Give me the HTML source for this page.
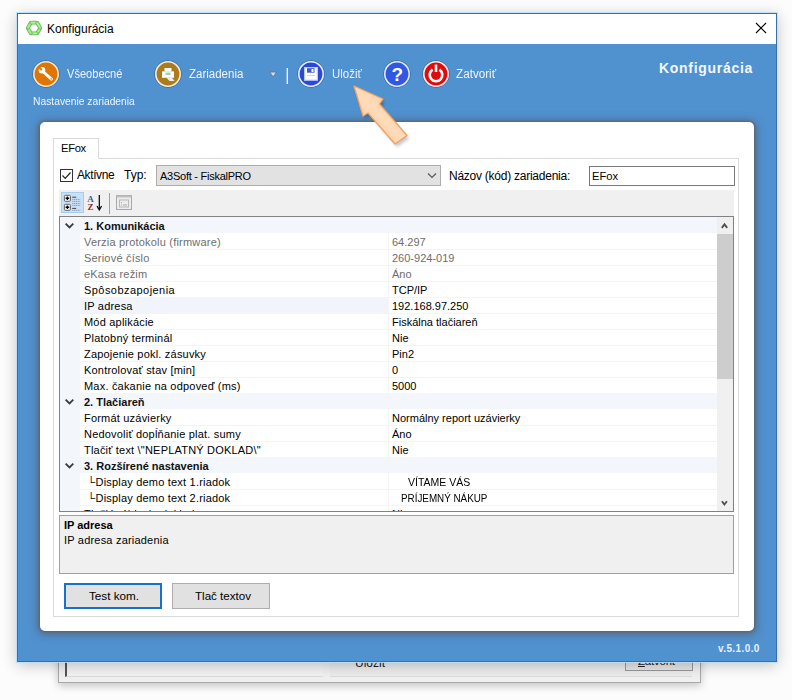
<!DOCTYPE html><html><head><meta charset="utf-8"><style>
*{margin:0;padding:0;box-sizing:border-box}
html,body{width:792px;height:700px;overflow:hidden;background:#fcfcfc;font-family:"Liberation Sans", sans-serif}
.a{position:absolute}
.t{white-space:nowrap}
</style></head><body><div class="a" style="left:58px;top:640px;width:643px;height:43px;background:#f0f0f0;border:1px solid #a9a9a9;box-shadow:0 3px 8px rgba(0,0,0,0.22)"></div>
<div class="a" style="left:65px;top:640px;width:258px;height:37px;background:#f3f3f3;border-left:2px solid #555;border-bottom:1px solid #ddd"></div>
<div class="a" style="left:330px;top:640px;width:362px;height:37px;background:#ececec;border-bottom:1px solid #ddd"></div>
<div class="a t" style="left:355px;top:657px;font-size:12px;line-height:12px;color:#222;font-weight:400;letter-spacing:0px;">Uložiť</div>
<div class="a" style="left:625px;top:650px;width:68px;height:21px;background:#e6e6e6;border:1px solid #999"></div>
<div class="a t" style="left:638px;top:656px;font-size:11.5px;line-height:11.5px;color:#222;font-weight:400;letter-spacing:-0.2px;"><u>Z</u>atvoriť</div>
<div class="a" style="left:17px;top:13px;width:760px;height:649px;background:#5091d0;border:1px solid #3a6fa3;box-shadow:0 0 0 1px rgba(185,222,255,0.85),0 3px 14px rgba(0,0,0,0.24)"></div>
<div class="a" style="left:18px;top:14px;width:758px;height:30px;background:#fff"></div>
<div class="a t" style="left:47px;top:23px;font-size:12px;line-height:12px;color:#000;font-weight:400;letter-spacing:0px;">Konfigurácia</div>
<svg class="a" style="left:755px;top:22px" width="12" height="12" viewBox="0 0 12 12"><path d="M1 1L11 11M11 1L1 11" stroke="#000" stroke-width="1.1"/></svg>
<svg class="a" style="left:25px;top:19px" width="18" height="18" viewBox="0 0 18 18"><path d="M14.95 9.43L12.35 13.94" stroke="#62b552" stroke-width="3.8" stroke-linecap="round"/><path d="M14.95 9.43L12.35 13.94" stroke="#a9ee92" stroke-width="2.2" stroke-linecap="round"/><path d="M11.60 14.37L6.40 14.37" stroke="#62b552" stroke-width="3.8" stroke-linecap="round"/><path d="M11.60 14.37L6.40 14.37" stroke="#a9ee92" stroke-width="2.2" stroke-linecap="round"/><path d="M5.65 13.94L3.05 9.43" stroke="#62b552" stroke-width="3.8" stroke-linecap="round"/><path d="M5.65 13.94L3.05 9.43" stroke="#a9ee92" stroke-width="2.2" stroke-linecap="round"/><path d="M3.05 8.57L5.65 4.06" stroke="#62b552" stroke-width="3.8" stroke-linecap="round"/><path d="M3.05 8.57L5.65 4.06" stroke="#a9ee92" stroke-width="2.2" stroke-linecap="round"/><path d="M6.40 3.63L11.60 3.63" stroke="#62b552" stroke-width="3.8" stroke-linecap="round"/><path d="M6.40 3.63L11.60 3.63" stroke="#a9ee92" stroke-width="2.2" stroke-linecap="round"/><path d="M12.35 4.06L14.95 8.57" stroke="#62b552" stroke-width="3.8" stroke-linecap="round"/><path d="M12.35 4.06L14.95 8.57" stroke="#a9ee92" stroke-width="2.2" stroke-linecap="round"/></svg>
<svg class="a" style="left:32px;top:60px" width="28" height="28" viewBox="0 0 28 28"><circle cx="14" cy="14" r="13.4" fill="none" stroke="rgba(30,40,60,0.35)" stroke-width="0.9"/><circle cx="14" cy="14" r="12.2" fill="#df7604" stroke="#f6e4cc" stroke-width="1.6"/><path d="M11.5 12 L19.4 19.1" stroke="#fff" stroke-width="3" stroke-linecap="round"/><circle cx="10" cy="10.2" r="3.3" fill="#fff"/><path d="M6.4 6.6 L9.8 10" stroke="#df7604" stroke-width="2"/><circle cx="19.2" cy="19" r="0.8" fill="#b87a50"/></svg>
<div class="a t" style="left:67px;top:68px;font-size:12.3px;line-height:12.3px;color:#eef4ff;font-weight:400;letter-spacing:0px;transform:scaleX(0.9);transform-origin:0 0;">Všeobecné</div>
<svg class="a" style="left:154px;top:60px" width="28" height="28" viewBox="0 0 28 28"><circle cx="14" cy="14" r="13.4" fill="none" stroke="rgba(30,40,60,0.35)" stroke-width="0.9"/><circle cx="14" cy="14" r="12.2" fill="#ac7b1d" stroke="#f6ecd6" stroke-width="1.6"/><rect x="10.5" y="8" width="7" height="3.6" fill="#fff"/><rect x="8" y="11.4" width="12" height="6.4" fill="#fff"/><rect x="11.5" y="12.5" width="5" height="2.5" fill="#a6d4a6"/><path d="M12.5 17.8 L18 17.8 L20.5 21 L15.5 21 Z" fill="#f0e8f2"/></svg>
<div class="a t" style="left:189px;top:68px;font-size:12.3px;line-height:12.3px;color:#eef4ff;font-weight:400;letter-spacing:0px;transform:scaleX(0.935);transform-origin:0 0;">Zariadenia</div>
<svg class="a" style="left:269px;top:71px" width="8" height="7" viewBox="0 0 8 7"><path d="M1 1.2H7.2L4.1 5.6Z" fill="#dcdde6" stroke="rgba(50,60,80,0.45)" stroke-width="0.7" stroke-linejoin="round"/></svg>
<div class="a" style="left:287px;top:68px;width:1px;height:16px;background:#e6f5ff;box-shadow:-1px 0 0 rgba(190,225,250,0.55)"></div>
<svg class="a" style="left:297px;top:60px" width="28" height="28" viewBox="0 0 28 28"><circle cx="14" cy="14" r="13.4" fill="none" stroke="rgba(30,40,60,0.35)" stroke-width="0.9"/><circle cx="14" cy="14" r="12.2" fill="#2b49d6" stroke="#e6ecff" stroke-width="1.6"/><rect x="7.6" y="7.6" width="12.8" height="12.6" fill="#fff" stroke="#b9c8ff" stroke-width="1.2"/><rect x="10" y="8.2" width="7.5" height="4.5" fill="#3a5ad8"/><rect x="14.5" y="9" width="2" height="3" fill="#fff"/><rect x="10" y="15" width="8" height="0.9" fill="#f0c8a0"/></svg>
<div class="a t" style="left:332px;top:68px;font-size:12.3px;line-height:12.3px;color:#eef4ff;font-weight:400;letter-spacing:0px;transform:scaleX(0.93);transform-origin:0 0;">Uložiť</div>
<svg class="a" style="left:383px;top:60px" width="28" height="28" viewBox="0 0 28 28"><circle cx="14" cy="14" r="13.4" fill="none" stroke="rgba(30,40,60,0.35)" stroke-width="0.9"/><circle cx="14" cy="14" r="12.2" fill="#3158e2" stroke="#dfe8ff" stroke-width="1.6"/><text x="14.2" y="21" font-family="Liberation Sans" font-weight="700" font-size="19" fill="#fff" text-anchor="middle">?</text></svg>
<svg class="a" style="left:422px;top:60px" width="28" height="28" viewBox="0 0 28 28"><circle cx="14" cy="14" r="13.4" fill="none" stroke="rgba(30,40,60,0.35)" stroke-width="0.9"/><circle cx="14" cy="14" r="12.2" fill="#e20b0b" stroke="#ffe6e6" stroke-width="1.6"/><path d="M10.6 9.6 A6.3 6.3 0 1 0 17.4 9.6" fill="none" stroke="#fff" stroke-width="2.6"/><path d="M14 4.6V12" stroke="#fff" stroke-width="2.6"/></svg>
<div class="a t" style="left:456px;top:68px;font-size:12.3px;line-height:12.3px;color:#eef4ff;font-weight:400;letter-spacing:0px;transform:scaleX(0.95);transform-origin:0 0;">Zatvoriť</div>
<div class="a t" style="left:659px;top:61px;font-size:14px;line-height:14px;color:#f4f8ff;font-weight:700;letter-spacing:0.7px;">Konfigurácia</div>
<div class="a t" style="left:33px;top:96px;font-size:10.5px;line-height:10.5px;color:#eef5ff;font-weight:400;letter-spacing:0px;transform:scaleX(0.98);transform-origin:0 0;">Nastavenie zariadenia</div>
<div class="a t" style="left:718px;top:644px;font-size:10px;line-height:10px;color:#e6f0ff;font-weight:700;letter-spacing:0.4px;">v.5.1.0.0</div>
<div class="a" style="left:40px;top:122px;width:714px;height:509px;background:#fff;border-radius:5px;box-shadow:0 0 2px 1px rgba(90,94,100,0.6),0 1px 9px 2px rgba(90,94,100,0.85)"></div>
<div class="a" style="left:53px;top:158px;width:686px;height:459px;border:1px solid #dadada"></div>
<div class="a" style="left:53px;top:138px;width:46px;height:21px;background:#fff;border:1px solid #dadada;border-bottom:none"></div>
<div class="a t" style="left:61px;top:143px;font-size:11.2px;line-height:11.2px;color:#000;font-weight:400;letter-spacing:-0.3px;">EFox</div>
<div class="a" style="left:60px;top:169px;width:13px;height:13px;border:1px solid #333;background:#fff"></div>
<svg class="a" style="left:61px;top:170px" width="11" height="11" viewBox="0 0 11 11"><path d="M1.5 5.5L4.2 8.3L9.5 2.5" fill="none" stroke="#222" stroke-width="1.2"/></svg>
<div class="a t" style="left:77px;top:169px;font-size:12px;line-height:12px;color:#000;font-weight:400;letter-spacing:-0.4px;">Aktívne</div>
<div class="a t" style="left:124px;top:169px;font-size:12px;line-height:12px;color:#000;font-weight:400;letter-spacing:0px;">Typ:</div>
<div class="a" style="left:156px;top:165px;width:285px;height:21px;background:#e2e2e2;border:1px solid #adadad"></div>
<div class="a t" style="left:160px;top:171px;font-size:11px;line-height:11px;color:#000;font-weight:400;letter-spacing:-0.25px;">A3Soft - FiskalPRO</div>
<svg class="a" style="left:427px;top:172px" width="10" height="7" viewBox="0 0 10 7"><path d="M1 1.5L5 5.5L9 1.5" fill="none" stroke="#555" stroke-width="1.1"/></svg>
<div class="a t" style="left:449px;top:170px;font-size:12px;line-height:12px;color:#000;font-weight:400;letter-spacing:-0.25px;">Názov (kód) zariadenia:</div>
<div class="a" style="left:589px;top:166px;width:146px;height:20px;background:#fff;border:1px solid #7a7a7a"></div>
<div class="a t" style="left:592px;top:171px;font-size:11.2px;line-height:11.2px;color:#000;font-weight:400;letter-spacing:0px;">EFox</div>
<div class="a" style="left:59px;top:190px;width:675px;height:26px;background:#f0f0f0"></div>
<div class="a" style="left:61px;top:192px;width:23px;height:21px;background:#c9e0f7;border:1px solid #a6cdf0"></div>
<svg class="a" style="left:62px;top:193px" width="21" height="19" viewBox="0 0 21 19"><g fill="#fff" stroke="#505050" stroke-width="0.9"><rect x="2.4" y="2.3" width="6" height="6" rx="1"/><rect x="2.4" y="11.3" width="6" height="6" rx="1"/></g><g stroke="#000" stroke-width="1.4"><path d="M3.6 5.3h3.6M5.4 3.5v3.6M3.6 14.3h3.6M5.4 12.5v3.6"/></g><g stroke="#333" stroke-width="0.9"><path d="M10.2 4.2h4M10.2 15.4h4"/></g><g stroke="#7a8a9a" stroke-width="0.8" stroke-dasharray="1.2 0.6"><path d="M10.2 6.4h8M10.2 8.4h8M10.2 10.5h8M10.2 12.4h8M10.2 17.3h8"/></g></svg>
<svg class="a" style="left:86px;top:193px" width="18" height="19" viewBox="0 0 18 19"><text x="4.5" y="8.5" font-family="Liberation Serif" font-weight="700" font-size="9" fill="#3a5a9a" text-anchor="middle">A</text><text x="4.5" y="17" font-family="Liberation Serif" font-weight="700" font-size="9" fill="#8a2a2a" text-anchor="middle">Z</text><path d="M13.3 2v14" stroke="#000" stroke-width="1.2"/><path d="M11 13 L13.3 17 L15.6 13" fill="none" stroke="#000" stroke-width="1.2"/></svg>
<div class="a" style="left:109px;top:193px;width:1px;height:21px;background:#a0a0a0"></div>
<svg class="a" style="left:115px;top:194px" width="18" height="17" viewBox="0 0 18 17"><rect x="1.5" y="1.5" width="15" height="14" fill="#ececec" stroke="#a8a8a8"/><rect x="1.5" y="1.5" width="15" height="2" fill="#c0c0c0"/><rect x="4.5" y="6" width="9" height="7" fill="none" stroke="#b8b8b8"/><path d="M6 8.5h1M6 11h1M8 11h4" stroke="#a8a8a8"/></svg>
<div class="a" style="left:59px;top:216px;width:675px;height:296px;background:#fff;border:1px solid #828282"></div>
<div class="a" style="left:60px;top:217px;width:657px;height:294px;overflow:hidden">
<div class="a" style="left:0;top:0;width:20px;height:400px;background:#f3f6fb"></div>
<div class="a" style="left:0;top:0px;width:657px;height:16px;background:#f3f6fb"></div>
<svg class="a" style="left:4px;top:5px" width="10" height="8" viewBox="0 0 10 8"><path d="M1.6 1.6L5.5 5.4L9.3 1.6" fill="none" stroke="#3a3a3a" stroke-width="1.8"/></svg>
<div class="a t" style="left:24px;top:4px;font-size:11px;line-height:11px;font-weight:700;color:#111">1. Komunikácia</div>
<div class="a" style="left:20px;top:32px;width:637px;height:1px;background:#f4f4f4"></div>
<div class="a t" style="left:24px;top:20px;font-size:11px;line-height:11px;color:#6d6d6d;letter-spacing:0.2px">Verzia protokolu (firmware)</div>
<div class="a" style="left:328px;top:16px;width:1px;height:16px;background:#f5f5f5"></div>
<div class="a t" style="left:332px;top:20px;font-size:11px;line-height:11px;color:#6d6d6d;white-space:pre">64.297</div>
<div class="a" style="left:20px;top:48px;width:637px;height:1px;background:#f4f4f4"></div>
<div class="a t" style="left:24px;top:36px;font-size:11px;line-height:11px;color:#6d6d6d;letter-spacing:0.2px">Seriové číslo</div>
<div class="a" style="left:328px;top:32px;width:1px;height:16px;background:#f5f5f5"></div>
<div class="a t" style="left:332px;top:36px;font-size:11px;line-height:11px;color:#6d6d6d;white-space:pre">260-924-019</div>
<div class="a" style="left:20px;top:64px;width:637px;height:1px;background:#f4f4f4"></div>
<div class="a t" style="left:24px;top:52px;font-size:11px;line-height:11px;color:#6d6d6d;letter-spacing:0.2px">eKasa režim</div>
<div class="a" style="left:328px;top:48px;width:1px;height:16px;background:#f5f5f5"></div>
<div class="a t" style="left:332px;top:52px;font-size:11px;line-height:11px;color:#6d6d6d;white-space:pre">Áno</div>
<div class="a" style="left:20px;top:80px;width:637px;height:1px;background:#f4f4f4"></div>
<div class="a t" style="left:24px;top:68px;font-size:11px;line-height:11px;color:#000;letter-spacing:0.45px">Spôsobzapojenia</div>
<div class="a" style="left:328px;top:64px;width:1px;height:16px;background:#f5f5f5"></div>
<div class="a t" style="left:332px;top:68px;font-size:11px;line-height:11px;color:#000;white-space:pre">TCP/IP</div>
<div class="a" style="left:20px;top:80px;width:308px;height:16px;background:#f1f5fb"></div>
<div class="a" style="left:20px;top:96px;width:637px;height:1px;background:#f4f4f4"></div>
<div class="a t" style="left:24px;top:84px;font-size:11px;line-height:11px;color:#000;letter-spacing:0.2px">IP adresa</div>
<div class="a" style="left:328px;top:80px;width:1px;height:16px;background:#f5f5f5"></div>
<div class="a t" style="left:332px;top:84px;font-size:11px;line-height:11px;color:#000;white-space:pre">192.168.97.250</div>
<div class="a" style="left:20px;top:112px;width:637px;height:1px;background:#f4f4f4"></div>
<div class="a t" style="left:24px;top:100px;font-size:11px;line-height:11px;color:#000;letter-spacing:0.2px">Mód aplikácie</div>
<div class="a" style="left:328px;top:96px;width:1px;height:16px;background:#f5f5f5"></div>
<div class="a t" style="left:332px;top:100px;font-size:11px;line-height:11px;color:#000;white-space:pre">Fiskálna tlačiareň</div>
<div class="a" style="left:20px;top:128px;width:637px;height:1px;background:#f4f4f4"></div>
<div class="a t" style="left:24px;top:116px;font-size:11px;line-height:11px;color:#000;letter-spacing:0.2px">Platobný terminál</div>
<div class="a" style="left:328px;top:112px;width:1px;height:16px;background:#f5f5f5"></div>
<div class="a t" style="left:332px;top:116px;font-size:11px;line-height:11px;color:#000;white-space:pre">Nie</div>
<div class="a" style="left:20px;top:144px;width:637px;height:1px;background:#f4f4f4"></div>
<div class="a t" style="left:24px;top:132px;font-size:11px;line-height:11px;color:#000;letter-spacing:0.2px">Zapojenie pokl. zásuvky</div>
<div class="a" style="left:328px;top:128px;width:1px;height:16px;background:#f5f5f5"></div>
<div class="a t" style="left:332px;top:132px;font-size:11px;line-height:11px;color:#000;white-space:pre">Pin2</div>
<div class="a" style="left:20px;top:160px;width:637px;height:1px;background:#f4f4f4"></div>
<div class="a t" style="left:24px;top:148px;font-size:11px;line-height:11px;color:#000;letter-spacing:0.2px">Kontrolovať stav [min]</div>
<div class="a" style="left:328px;top:144px;width:1px;height:16px;background:#f5f5f5"></div>
<div class="a t" style="left:332px;top:148px;font-size:11px;line-height:11px;color:#000;white-space:pre">0</div>
<div class="a" style="left:20px;top:176px;width:637px;height:1px;background:#f4f4f4"></div>
<div class="a t" style="left:24px;top:164px;font-size:11px;line-height:11px;color:#000;letter-spacing:0.2px">Max. čakanie na odpoveď (ms)</div>
<div class="a" style="left:328px;top:160px;width:1px;height:16px;background:#f5f5f5"></div>
<div class="a t" style="left:332px;top:164px;font-size:11px;line-height:11px;color:#000;white-space:pre">5000</div>
<div class="a" style="left:0;top:176px;width:657px;height:16px;background:#f3f6fb"></div>
<svg class="a" style="left:4px;top:181px" width="10" height="8" viewBox="0 0 10 8"><path d="M1.6 1.6L5.5 5.4L9.3 1.6" fill="none" stroke="#3a3a3a" stroke-width="1.8"/></svg>
<div class="a t" style="left:24px;top:180px;font-size:11px;line-height:11px;font-weight:700;color:#111">2. Tlačiareň</div>
<div class="a" style="left:20px;top:208px;width:637px;height:1px;background:#f4f4f4"></div>
<div class="a t" style="left:24px;top:196px;font-size:11px;line-height:11px;color:#000;letter-spacing:0.2px">Formát uzávierky</div>
<div class="a" style="left:328px;top:192px;width:1px;height:16px;background:#f5f5f5"></div>
<div class="a t" style="left:332px;top:196px;font-size:11px;line-height:11px;color:#000;white-space:pre">Normálny report uzávierky</div>
<div class="a" style="left:20px;top:224px;width:637px;height:1px;background:#f4f4f4"></div>
<div class="a t" style="left:24px;top:212px;font-size:11px;line-height:11px;color:#000;letter-spacing:0.2px">Nedovoliť dopĺňanie plat. sumy</div>
<div class="a" style="left:328px;top:208px;width:1px;height:16px;background:#f5f5f5"></div>
<div class="a t" style="left:332px;top:212px;font-size:11px;line-height:11px;color:#000;white-space:pre">Áno</div>
<div class="a" style="left:20px;top:240px;width:637px;height:1px;background:#f4f4f4"></div>
<div class="a t" style="left:24px;top:228px;font-size:11px;line-height:11px;color:#000;letter-spacing:0.2px">Tlačiť text \"NEPLATNÝ DOKLAD\"</div>
<div class="a" style="left:328px;top:224px;width:1px;height:16px;background:#f5f5f5"></div>
<div class="a t" style="left:332px;top:228px;font-size:11px;line-height:11px;color:#000;white-space:pre">Nie</div>
<div class="a" style="left:0;top:240px;width:657px;height:16px;background:#f3f6fb"></div>
<svg class="a" style="left:4px;top:245px" width="10" height="8" viewBox="0 0 10 8"><path d="M1.6 1.6L5.5 5.4L9.3 1.6" fill="none" stroke="#3a3a3a" stroke-width="1.8"/></svg>
<div class="a t" style="left:24px;top:244px;font-size:11px;line-height:11px;font-weight:700;color:#111">3. Rozšírené nastavenia</div>
<div class="a" style="left:20px;top:272px;width:637px;height:1px;background:#f4f4f4"></div>
<div class="a t" style="left:27.5px;top:260px;font-size:11px;line-height:11px;color:#000;letter-spacing:0.2px">└Display demo text 1.riadok</div>
<div class="a" style="left:328px;top:256px;width:1px;height:16px;background:#f5f5f5"></div>
<div class="a t" style="left:347.7px;top:260px;font-size:11px;line-height:11px;color:#000;transform:scaleX(0.955);transform-origin:0 0">VÍTAME VÁS</div>
<div class="a" style="left:20px;top:288px;width:637px;height:1px;background:#f4f4f4"></div>
<div class="a t" style="left:27.5px;top:276px;font-size:11px;line-height:11px;color:#000;letter-spacing:0.2px">└Display demo text 2.riadok</div>
<div class="a" style="left:328px;top:272px;width:1px;height:16px;background:#f5f5f5"></div>
<div class="a t" style="left:340.5px;top:276px;font-size:11px;line-height:11px;color:#000;transform:scaleX(0.895);transform-origin:0 0">PRÍJEMNÝ NÁKUP</div>
<div class="a" style="left:20px;top:304px;width:637px;height:1px;background:#f4f4f4"></div>
<div class="a t" style="left:24px;top:292px;font-size:11px;line-height:11px;color:#000;letter-spacing:0.2px">Tlačiť záhlavie dokladu</div>
<div class="a" style="left:328px;top:288px;width:1px;height:16px;background:#f5f5f5"></div>
<div class="a t" style="left:332px;top:292px;font-size:11px;line-height:11px;color:#000;white-space:pre">Nie</div>
</div>
<div class="a" style="left:717px;top:217px;width:16px;height:294px;background:#f0f0f0"></div>
<div class="a" style="left:717px;top:234px;width:16px;height:145px;background:#cdcdcd"></div>
<svg class="a" style="left:720px;top:221px" width="10" height="8" viewBox="0 0 10 8"><path d="M1.8 6.8L4.5 3.3L7.2 6.8" fill="none" stroke="#505050" stroke-width="1.9"/></svg>
<svg class="a" style="left:720px;top:499px" width="10" height="8" viewBox="0 0 10 8"><path d="M1.9 2.2L4.4 5.5L6.9 2.2" fill="none" stroke="#505050" stroke-width="1.9"/></svg>
<div class="a" style="left:59px;top:515px;width:675px;height:59px;background:#f0f0f0;border:1px solid #a0a0a0"></div>
<div class="a t" style="left:64px;top:520px;font-size:11px;line-height:11px;color:#000;font-weight:700;letter-spacing:0px;">IP adresa</div>
<div class="a t" style="left:64px;top:535px;font-size:11px;line-height:11px;color:#000;font-weight:400;letter-spacing:0.2px;">IP adresa zariadenia</div>
<div class="a" style="left:64px;top:583px;width:98px;height:26px;background:#e1e1e1;border:2px solid #1672cc"></div>
<div class="a t" style="left:89px;top:590px;font-size:11.7px;line-height:11.7px;color:#000;font-weight:400;letter-spacing:0px;">Test kom.</div>
<div class="a" style="left:172px;top:583px;width:98px;height:26px;background:#e1e1e1;border:1px solid #adadad"></div>
<div class="a t" style="left:195px;top:590px;font-size:11.6px;line-height:11.6px;color:#000;font-weight:400;letter-spacing:0px;">Tlač textov</div>
<svg class="a" style="left:0px;top:0px" width="792" height="700" viewBox="0 0 792 700"><defs><linearGradient id="ag" x1="0" y1="0" x2="1" y2="0" gradientTransform="rotate(-48 .5 .5)"><stop offset="0" stop-color="#ffc690"/><stop offset="0.5" stop-color="#ffdcbc"/><stop offset="1" stop-color="#ffc590"/></linearGradient><filter id="sh" x="-20%" y="-20%" width="140%" height="140%"><feGaussianBlur stdDeviation="1.5"/></filter></defs><path d="M356 89 L385 102 L381.5 107 L409 138.5 L397 147 L370 116 L365 119 Z" fill="rgba(0,0,0,0.22)" filter="url(#sh)"/><path d="M354 86 L383 99 L379.5 104 L407 135.5 L395 144 L368 113 L363 116 Z" fill="url(#ag)" stroke="#f0a462" stroke-width="1.3" stroke-linejoin="round"/></svg></body></html>
